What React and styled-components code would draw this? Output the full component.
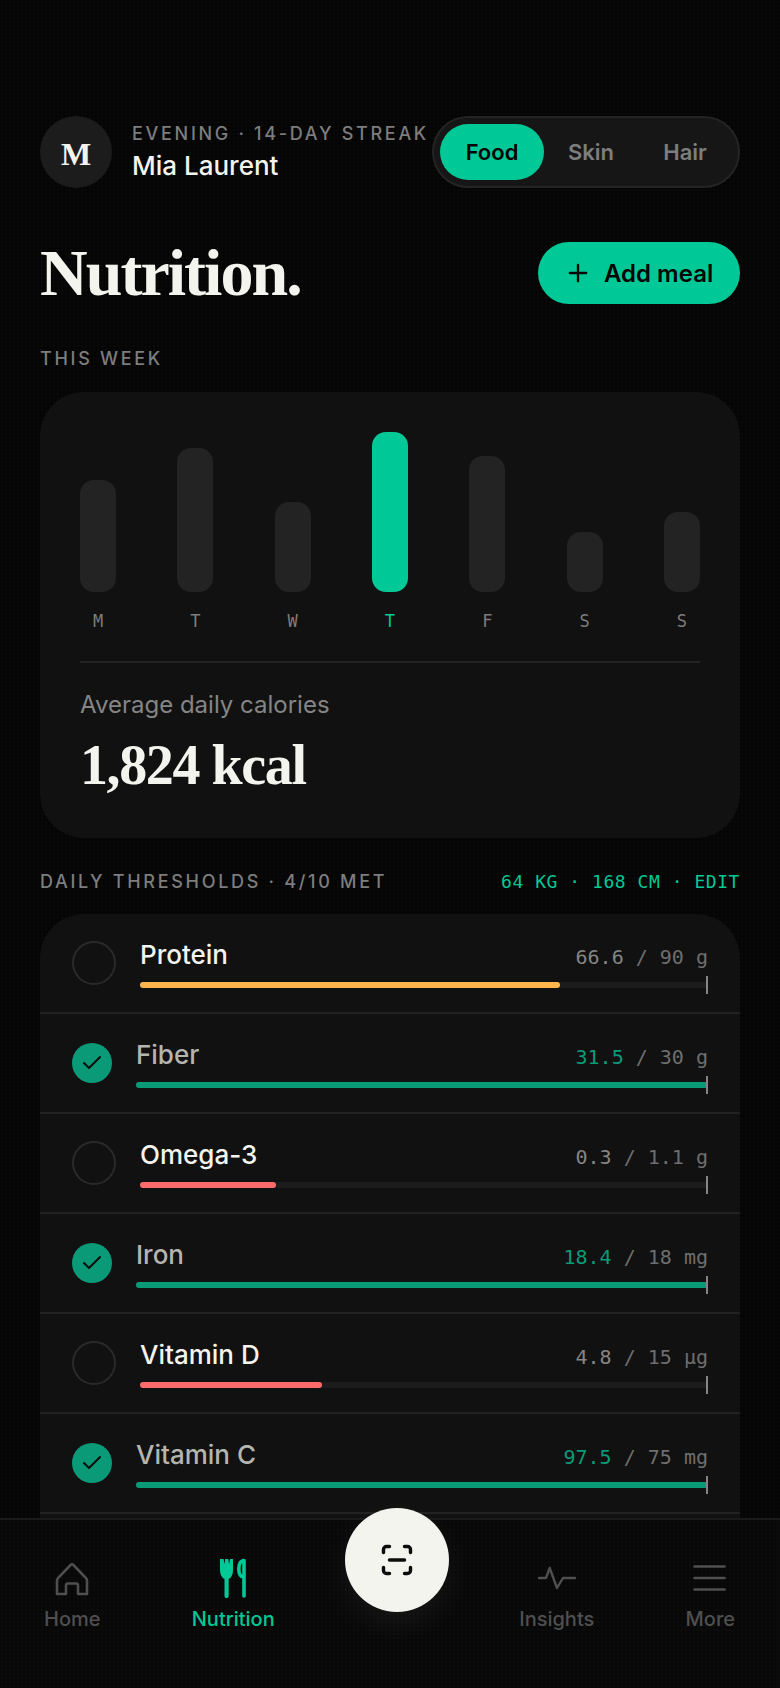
import styled, { createGlobalStyle } from "styled-components";
import { Check, Plus, ScanLine } from "lucide-react";

const ACCENT = "#00c896";
const MET = "#0a9a78";
const INK = "#f4f4ee";
const SANS = `Inter, "Liberation Sans", sans-serif`;
const SERIF = `"Liberation Serif", serif`;
const MONO = `"DejaVu Sans Mono", "Liberation Mono", monospace`;

const week = [
	{ day: "M", height: 112 },
	{ day: "T", height: 144 },
	{ day: "W", height: 90 },
	{ day: "T", height: 160, active: true },
	{ day: "F", height: 136 },
	{ day: "S", height: 60 },
	{ day: "S", height: 80 },
];

const nutrients = [
	{ name: "Protein", value: "66.6", target: "90 g", pct: 74, fill: "#ffb54c" },
	{ name: "Fiber", value: "31.5", target: "30 g", pct: 100, met: true },
	{ name: "Omega-3", value: "0.3", target: "1.1 g", pct: 24, fill: "#ff6b6b" },
	{ name: "Iron", value: "18.4", target: "18 mg", pct: 100, met: true },
	{ name: "Vitamin D", value: "4.8", target: "15 µg", pct: 32, fill: "#ff6b6b" },
	{ name: "Vitamin C", value: "97.5", target: "75 mg", pct: 100, met: true },
];

const HomeIcon = () => (
	<NavSvg viewBox="0 0 40 40" fill="none" stroke="currentColor" strokeWidth="2.6" strokeLinejoin="round">
		<path d="M5 36V22.5q0-1.4 1-2.3L18.6 7q1.4-1.3 2.8 0L34 20.2q1 .9 1 2.3V36H26V27.5a2 2 0 0 0-2-2h-8a2 2 0 0 0-2 2V36Z" />
	</NavSvg>
);

const ForkKnifeIcon = () => (
	<NavSvg viewBox="0 0 40 40">
		<path
			fill="currentColor"
			d="M7 1v11c0 5 2.4 8 4.5 9v17a2.1 2.1 0 0 0 4.2 0V21c2.1-1 4.3-4 4.3-9V1h-3l-.9 5-.8-5h-3l-.8 5-.9-5Z"
		/>
		<path
			fill="none"
			stroke="currentColor"
			strokeWidth="3.6"
			strokeLinecap="round"
			d="M31 2.5c-3.6 0-5.2 4-5.2 8.500 0 4.500 1.600 8 5.200 8M31 2.500V38"
		/>
	</NavSvg>
);

const PulseIcon = () => (
	<NavSvg viewBox="0 0 40 40" fill="none" stroke="currentColor" strokeWidth="2.4" strokeLinecap="round" strokeLinejoin="round">
		<path d="M2 20h7l3.700-10 7.300 20 6-10h12" />
	</NavSvg>
);

const MenuIcon = () => (
	<NavSvg viewBox="0 0 40 40" fill="none" stroke="currentColor" strokeWidth="2.600" strokeLinecap="round">
		<path d="M4.500 8.500h30M4.500 20h30M4.500 31.500h30" />
	</NavSvg>
);

const App = () => (
	<>
		<GlobalStyle />
		<Screen>
			<Header>
				<Profile>
					<Avatar>M</Avatar>
					<div>
						<Eyebrow>EVENING · 14-DAY STREAK</Eyebrow>
						<UserName>Mia Laurent</UserName>
					</div>
				</Profile>
				<Segments>
					<Segment $active>Food</Segment>
					<Segment>Skin</Segment>
					<Segment>Hair</Segment>
				</Segments>
			</Header>

			<TitleRow>
				<Title>Nutrition.</Title>
				<AddButton>
					<Plus size={28} strokeWidth={2} />
					Add meal
				</AddButton>
			</TitleRow>

			<SectionLabel>THIS WEEK</SectionLabel>
			<WeekCard>
				<Chart>
					{week.map((item, index) => (
						<ChartColumn key={index}>
							<Bar $active={item.active} style={{ height: item.height }} />
							<DayLabel $active={item.active}>{item.day}</DayLabel>
						</ChartColumn>
					))}
				</Chart>
				<CardDivider />
				<AverageLabel>Average daily calories</AverageLabel>
				<AverageValue>1,824 kcal</AverageValue>
			</WeekCard>

			<ThresholdHeader>
				<SectionLabel as="span">DAILY THRESHOLDS · 4/10 MET</SectionLabel>
				<EditLink>64 KG · 168 CM · EDIT</EditLink>
			</ThresholdHeader>
			<List>
				{nutrients.map((item) => (
					<Row key={item.name}>
						<Tick $met={item.met}>{item.met && <Check size={24} strokeWidth={2} />}</Tick>
						<RowBody>
							<RowTop>
								<Name $met={item.met}>{item.name}</Name>
								<Amount>
									<AmountValue $met={item.met}>{item.value}</AmountValue> / {item.target}
								</Amount>
							</RowTop>
							<Track>
								<Fill $color={item.met ? MET : item.fill} style={{ width: `${item.pct}%` }} />
								<Goal />
							</Track>
						</RowBody>
					</Row>
				))}
			</List>

			<BottomNav>
				<NavItem>
					<HomeIcon />
					Home
				</NavItem>
				<NavItem $active>
					<ForkKnifeIcon />
					Nutrition
				</NavItem>
				<ScanButton>
					<ScanLine size={36} strokeWidth={2.3} />
				</ScanButton>
				<NavItem>
					<PulseIcon />
					Insights
				</NavItem>
				<NavItem>
					<MenuIcon />
					More
				</NavItem>
			</BottomNav>
		</Screen>
	</>
);

const GlobalStyle = createGlobalStyle`
	html, body {
		margin: 0;
		padding: 0;
		height: 100%;
		background: #050505;
		overflow: hidden;
	}

	* {
		box-sizing: border-box;
	}
`;

const Screen = styled.div`
	position: relative;
	width: 780px;
	height: 1688px;
	overflow: hidden;
	padding: 116px 40px 0;
	background-color: #050505;
	background-image: radial-gradient(rgba(255, 255, 255, 0.02) 1px, transparent 1px);
	background-size: 4px 4px;
	color: ${INK};
	font-family: ${SANS};
`;

const Header = styled.header`
	display: flex;
	justify-content: space-between;
	align-items: center;
`;

const Profile = styled.div`
	display: flex;
	align-items: center;
	gap: 20px;
`;

const Avatar = styled.div`
	width: 72px;
	height: 72px;
	padding-top: 4px;
	border-radius: 50%;
	background: #1c1c1c;
	display: flex;
	align-items: center;
	justify-content: center;
	font-family: ${SERIF};
	font-weight: 700;
	font-size: 32px;
`;

const Eyebrow = styled.div`
	font-size: 18px;
	line-height: 24px;
	font-weight: 500;
	letter-spacing: 0.15em;
	color: #7d7d7d;
	white-space: nowrap;
`;

const UserName = styled.div`
	margin-top: 4px;
	font-size: 26px;
	line-height: 32px;
	font-weight: 500;
	color: ${INK};
`;

const Segments = styled.div`
	display: grid;
	grid-template-columns: 104px 94px 94px;
	width: 308px;
	height: 72px;
	padding: 6px;
	border: 2px solid #242424;
	border-radius: 36px;
	background: #161616;
`;

const Segment = styled.div`
	display: flex;
	align-items: center;
	justify-content: center;
	border-radius: 28px;
	font-size: 22px;
	font-weight: 600;
	color: ${(props) => (props.$active ? "#050505" : "#7d7d7d")};
	background: ${(props) => (props.$active ? ACCENT : "transparent")};
`;

const TitleRow = styled.div`
	display: flex;
	justify-content: space-between;
	align-items: center;
	margin-top: 54px;
`;

const Title = styled.h1`
	margin: 0;
	font-family: ${SERIF};
	font-weight: 700;
	font-size: 66px;
	line-height: 62px;
	letter-spacing: -0.03em;
	color: ${INK};
`;

const AddButton = styled.button`
	display: flex;
	align-items: center;
	gap: 12px;
	width: 202px;
	height: 62px;
	padding: 0 0 0 26px;
	border: 0;
	border-radius: 31px;
	background: ${ACCENT};
	color: #050505;
	font-family: ${SANS};
	font-size: 24px;
	font-weight: 600;
`;

const SectionLabel = styled.div`
	margin-top: 43px;
	font-size: 18px;
	line-height: 24px;
	font-weight: 500;
	letter-spacing: 0.15em;
	color: #7d7d7d;
`;

const WeekCard = styled.section`
	margin-top: 21px;
	height: 446px;
	padding: 40px;
	border-radius: 44px;
	background: #111111;
`;

const Chart = styled.div`
	display: flex;
	justify-content: space-between;
	align-items: flex-end;
	height: 201px;
`;

const ChartColumn = styled.div`
	display: flex;
	flex-direction: column;
	align-items: center;
	width: 36px;
`;

const Bar = styled.div`
	width: 36px;
	border-radius: 14px;
	background: ${(props) => (props.$active ? ACCENT : "#232323")};
`;

const DayLabel = styled.div`
	margin-top: 17px;
	font-family: ${MONO};
	font-size: 17px;
	line-height: 24px;
	color: ${(props) => (props.$active ? ACCENT : "#7d7d7d")};
`;

const CardDivider = styled.div`
	height: 2px;
	margin-top: 28px;
	background: #232323;
`;

const AverageLabel = styled.div`
	margin-top: 26px;
	font-size: 24px;
	line-height: 32px;
	color: #858585;
`;

const AverageValue = styled.div`
	margin-top: 14px;
	font-family: ${SERIF};
	font-weight: 700;
	font-size: 56px;
	line-height: 60px;
	letter-spacing: -0.025em;
	color: ${INK};
`;

const ThresholdHeader = styled.div`
	display: flex;
	justify-content: space-between;
	align-items: center;
	margin-top: 32px;

	span {
		margin-top: 0;
	}
`;

const EditLink = styled.span`
	font-family: ${MONO};
	font-size: 18px;
	line-height: 24px;
	letter-spacing: 0.03em;
	color: ${ACCENT};
`;

const List = styled.section`
	margin-top: 20px;
	padding-bottom: 20px;
	border-radius: 44px 44px 0 0;
	background: #111111;
`;

const Row = styled.div`
	display: flex;
	align-items: center;
	height: 100px;
	padding: 0 32px;
	border-bottom: 2px solid #222222;
`;

const Tick = styled.div`
	flex: none;
	display: flex;
	align-items: center;
	justify-content: center;
	width: ${(props) => (props.$met ? "40px" : "44px")};
	height: ${(props) => (props.$met ? "40px" : "44px")};
	margin-right: 24px;
	border-radius: 50%;
	border: ${(props) => (props.$met ? "0" : "2px solid #2a2a2a")};
	background: ${(props) => (props.$met ? MET : "transparent")};
	color: #0b0b0b;
`;

const RowBody = styled.div`
	flex: 1;
	min-width: 0;
`;

const RowTop = styled.div`
	display: flex;
	justify-content: space-between;
	align-items: center;
	height: 32px;
	margin-bottom: 12px;
`;

const Name = styled.div`
	padding-top: 2px;
	font-size: 26px;
	line-height: 32px;
	font-weight: 500;
	color: ${(props) => (props.$met ? "#b5b5b0" : INK)};
`;

const Amount = styled.div`
	padding-top: 6px;
	font-family: ${MONO};
	font-size: 20px;
	line-height: 32px;
	color: #6e6e6e;
`;

const AmountValue = styled.span`
	color: ${(props) => (props.$met ? MET : "#858585")};
`;

const Track = styled.div`
	position: relative;
	height: 6px;
	border-radius: 3px;
	background: #1c1c1c;
`;

const Fill = styled.div`
	height: 100%;
	border-radius: 3px;
	background: ${(props) => props.$color};
`;

const Goal = styled.div`
	position: absolute;
	right: 0;
	top: -6px;
	width: 2px;
	height: 18px;
	background: #858585;
`;

const BottomNav = styled.nav`
	position: absolute;
	left: 0;
	right: 0;
	bottom: 0;
	height: 170px;
	display: flex;
	justify-content: space-between;
	align-items: flex-start;
	padding: 38px 45px 0 44px;
	border-top: 2px solid #1a1a1a;
	background-color: #080808;
	background-image: radial-gradient(rgba(255, 255, 255, 0.02) 1px, transparent 1px);
	background-size: 4px 4px;
`;

const NavItem = styled.div`
	display: flex;
	flex-direction: column;
	align-items: center;
	gap: 9px;
	font-size: 20px;
	line-height: 24px;
	font-weight: 500;
	color: ${(props) => (props.$active ? ACCENT : "#4f4f4f")};
`;

const NavSvg = styled.svg`
	display: block;
	width: 40px;
	height: 40px;
`;

const ScanButton = styled.button`
	flex: none;
	display: flex;
	align-items: center;
	justify-content: center;
	width: 104px;
	height: 104px;
	margin: -50px -21px 0;
	padding: 0;
	border: 0;
	border-radius: 50%;
	background: ${INK};
	color: #0b0b0b;
	box-shadow: 0 12px 32px rgba(255, 255, 255, 0.06);
`;

export default App;
